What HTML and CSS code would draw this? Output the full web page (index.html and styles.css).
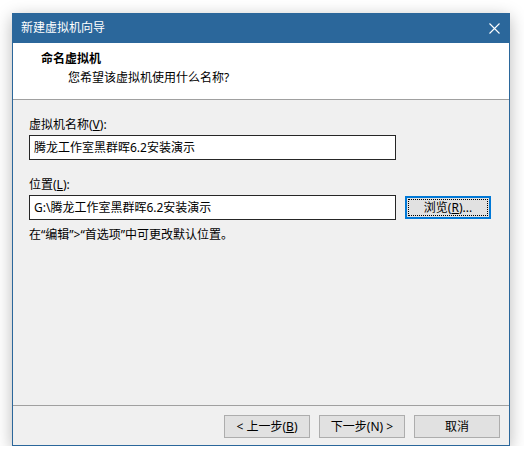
FILE: index.html
```html
<!DOCTYPE html>
<html lang="zh-CN">
<head>
<meta charset="utf-8">
<title>新建虚拟机向导</title>
<link rel="stylesheet" href="styles.css">
</head>
<body>
<div class="window">
  <div class="titlebar">
    <span class="title">新建虚拟机向导</span>
    <svg class="close" width="11" height="11" viewBox="0 0 11 11">
      <path d="M0.5 0.5 L10.5 10.5 M10.5 0.5 L0.5 10.5" stroke="#fff" stroke-width="1.1" fill="none"/>
    </svg>
  </div>
  <div class="header">
    <div class="header-title">命名虚拟机</div>
    <div class="header-sub">您希望该虚拟机使用什么名称?</div>
  </div>
  <div class="content">
    <div class="label">虚拟机名称(<u>V</u>):</div>
    <div class="field">腾龙工作室黑群晖6.2安装演示</div>
    <div class="label label-second">位置(<u>L</u>):</div>
    <div class="row">
      <div class="field">G:\腾龙工作室黑群晖6.2安装演示</div>
      <div class="btn btn-focus"><span class="focus-ring">浏览(<u>R</u>)...</span></div>
    </div>
    <div class="hint">在“编辑”&gt;“首选项”中可更改默认位置。</div>
  </div>
  <div class="footer">
    <div class="btn">&lt; 上一步(<u>B</u>)</div>
    <div class="btn">下一步(N) &gt;</div>
    <div class="btn">取消</div>
  </div>
</div>
</body>
</html>
```
FILE: styles.css
```css
html, body {
  margin: 0;
  background: #ffffff;
}

body {
  padding: 13px 0 0 12px;
  font-family: "Noto Sans", "Noto Sans CJK SC", sans-serif;
  font-size: 12px;
  color: #000;
}

.window {
  width: 498px;
  height: 433px;
  box-sizing: border-box;
  border: 1px solid #2b679b;
  background: #f0f0f0;
  display: flex;
  flex-direction: column;
  box-shadow: 0 4px 16px rgba(0, 0, 0, 0.28);
}

.titlebar {
  height: 29px;
  flex: none;
  background: #2b679b;
  color: #fff;
  display: flex;
  align-items: center;
  justify-content: space-between;
  padding: 0 9px 0 8px;
}

.title {
  line-height: 16px;
  margin-top: -1px;
}

.close {
  display: block;
  margin-top: -1px;
}

.header {
  height: 56px;
  flex: none;
  background: #fff;
  border-bottom: 1px solid #a0a0a0;
  box-sizing: content-box;
  padding: 0;
}

.header-title {
  font-weight: bold;
  line-height: 16px;
  padding: 8px 0 0 28px;
}

.header-sub {
  line-height: 16px;
  padding: 3px 0 0 55px;
}

.content {
  flex: 1;
  padding: 17px 0 0 16px;
  display: flex;
  flex-direction: column;
  align-items: flex-start;
  border-bottom: 1px solid #a0a0a0;
}

.label {
  line-height: 16px;
  margin-bottom: 2px;
}

.label-second {
  margin-top: 17px;
}

.field {
  width: 367px;
  height: 25px;
  box-sizing: border-box;
  border: 1px solid #262626;
  background: #fff;
  padding: 0 4px;
  line-height: 23px;
  white-space: nowrap;
}

.row {
  display: flex;
  align-items: center;
  gap: 9px;
}

.hint {
  line-height: 16px;
  margin-top: 7px;
}

.footer {
  height: 39px;
  flex: none;
  display: flex;
  justify-content: flex-end;
  align-items: flex-start;
  gap: 9px;
  padding: 9px 9px 0 0;
  box-sizing: border-box;
}

.btn {
  width: 86px;
  height: 23px;
  box-sizing: border-box;
  border: 1px solid #adadad;
  background: #e1e1e1;
  display: flex;
  align-items: center;
  justify-content: center;
  line-height: 16px;
  white-space: nowrap;
}

.btn-focus {
  border: 2px solid #0078d7;
  padding: 1px;
}

.focus-ring {
  flex: 1;
  align-self: stretch;
  border: 1px dotted #000;
  display: flex;
  align-items: center;
  justify-content: center;
}
```
